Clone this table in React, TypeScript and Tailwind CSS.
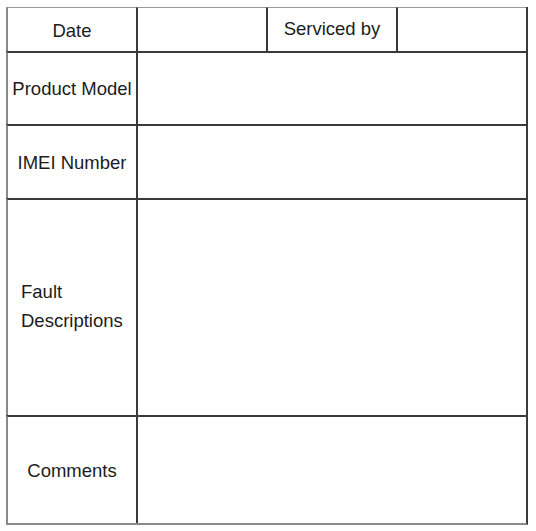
export default function App() {
  const label = "text-[18.5px] text-[#1c1c1c] leading-none";
  return (
    <div className="w-[536px] h-[531px] bg-white pl-[6px] pt-[7px]" style={{ fontFamily: '"Liberation Sans", Arial, sans-serif' }}>
      <div className="grid grid-cols-[130px_130px_130px_130px] grid-rows-[44px_73px_74px_217px_108px] w-[522px] border-r-2 border-b-2 border-r-[#3a3a3a] border-b-[#8a8a8a]">
        {/* Header row */}
        <div className={`flex items-center justify-center pt-[3px] border-l-2 border-t border-l-[#8a8a8a] border-t-[#9a9a9a] ${label}`}>Date</div>
        <div className="border-l-2 border-t border-l-[#3a3a3a] border-t-[#9a9a9a]" />
        <div className={`flex items-center justify-center pb-[1px] border-l-2 border-t border-l-[#3a3a3a] border-t-[#9a9a9a] ${label}`}>Serviced by</div>
        <div className="border-l-2 border-t border-l-[#3a3a3a] border-t-[#9a9a9a]" />

        {/* Product Model */}
        <div className={`flex items-center justify-center pt-[2px] border-l-2 border-t-2 border-l-[#8a8a8a] border-t-[#3a3a3a] ${label}`}>Product Model</div>
        <div className="col-span-3 border-l-2 border-t-2 border-[#3a3a3a]" />

        {/* IMEI */}
        <div className={`flex items-center justify-center pt-[2px] border-l-2 border-t-2 border-l-[#8a8a8a] border-t-[#3a3a3a] ${label}`}>IMEI Number</div>
        <div className="col-span-3 border-l-2 border-t-2 border-[#3a3a3a]" />

        {/* Fault Descriptions */}
        <div className="flex flex-col justify-center pl-[13px] pb-[3px] border-l-2 border-t-2 border-l-[#8a8a8a] border-t-[#3a3a3a] text-[18.5px] text-[#1c1c1c] leading-[29px]">
          <span>Fault</span>
          <span>Descriptions</span>
        </div>
        <div className="col-span-3 border-l-2 border-t-2 border-[#3a3a3a]" />

        {/* Comments */}
        <div className={`flex items-center justify-center pt-[2px] border-l-2 border-t-2 border-l-[#8a8a8a] border-t-[#3a3a3a] ${label}`}>Comments</div>
        <div className="col-span-3 border-l-2 border-t-2 border-[#3a3a3a]" />
      </div>
    </div>
  );
}
